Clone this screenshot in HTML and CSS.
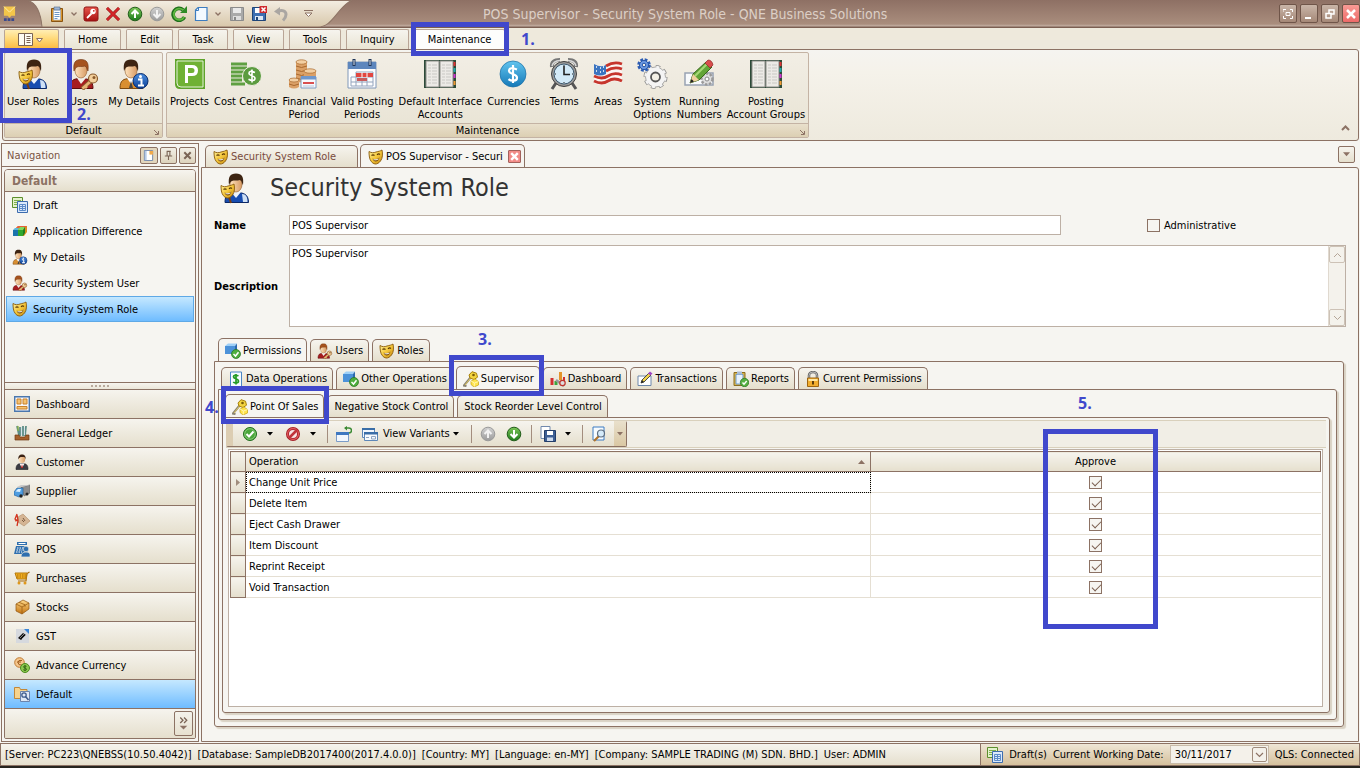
FILE: index.html
```html
<!DOCTYPE html>
<html lang="en">
<head>
    <meta charset="UTF-8">
    <meta name="viewport" content="width=device-width, initial-scale=1.0">
    <title>POS Supervisor - Security System Role - QNE Business Solutions</title>
    <link rel="stylesheet" href="styles.css">
</head>
<body>

<!-- shared icons -->
<svg class="sprite" aria-hidden="true">
    <defs>
        <linearGradient id="gGold" x1="0" y1="0" x2="1" y2="1"><stop offset="0" stop-color="#fff3a0"/><stop offset=".5" stop-color="#f5c83c"/><stop offset="1" stop-color="#c4860f"/></linearGradient>
        <linearGradient id="gGreen" x1="0" y1="0" x2="0" y2="1"><stop offset="0" stop-color="#7cc657"/><stop offset="1" stop-color="#1d7a1c"/></linearGradient>
        <linearGradient id="gGray" x1="0" y1="0" x2="0" y2="1"><stop offset="0" stop-color="#d2d2d2"/><stop offset="1" stop-color="#9b9b9b"/></linearGradient>
        <linearGradient id="gBlue" x1="0" y1="0" x2="0" y2="1"><stop offset="0" stop-color="#62c4ee"/><stop offset="1" stop-color="#1579b8"/></linearGradient>
        <linearGradient id="gInfo" x1="0" y1="0" x2="0" y2="1"><stop offset="0" stop-color="#4d8fe0"/><stop offset="1" stop-color="#0b3f96"/></linearGradient>
        <linearGradient id="gRed" x1="0" y1="0" x2="0" y2="1"><stop offset="0" stop-color="#e8574c"/><stop offset="1" stop-color="#a80f10"/></linearGradient>
        <linearGradient id="gFace" x1="0" y1="0" x2="1" y2="0"><stop offset="0" stop-color="#ffe3bd"/><stop offset="1" stop-color="#d79a64"/></linearGradient>
        <linearGradient id="gBox" x1="0" y1="0" x2="0" y2="1"><stop offset="0" stop-color="#ffd98a"/><stop offset="1" stop-color="#c4730f"/></linearGradient>
    </defs>

    <symbol id="mask" viewBox="0 0 16 16">
        <path d="M1 2.500c2.500 1.500 4.500 1.500 7 .5 2.500-.6 4.500-1 6-2 .8 4 .8 8-1.500 11-1.500 2-3.500 3.200-5.500 3-3-.6-5-3.500-5.600-7C1.100 6 1 4 1 2.500z" fill="url(#gGold)" stroke="#8a5a08" stroke-width=".9"/>
        <path d="M3.500 6.500q1.500-1.200 3 0M9 5.800q1.500-1.500 3-.4" fill="none" stroke="#5b3704" stroke-width="1.200"/>
        <path d="M4.500 9.500c2 1 5 .8 7-1-.6 2.500-2 4-3.800 4-1.500 0-2.600-1.200-3.200-3z" fill="#7a4a06"/>
        <path d="M5.600 10.500c1.500.6 3.300.4 4.800-.5" stroke="#fff" stroke-width="1" fill="none"/>
    </symbol>
    <symbol id="personBlue" viewBox="0 0 32 32">
        <path d="M6 30.500c0-8 3-10 11-10s12.500 2 12.500 10z" fill="#174cb0" stroke="#0b2766"/>
        <path d="M23 22c4 0 5.500 3 5.500 8H24z" fill="#cfe0f5"/><path d="M12 20l5 6 5-6-5-2z" fill="#eef3fa"/>
        <ellipse cx="17" cy="12.500" rx="6" ry="7.500" fill="url(#gFace)" stroke="#8f5a2a" stroke-width=".6"/>
        <path d="M10 13C9 5 11 1.500 17 1.500S25 5 24 13c-1-1-1-4-3-5-3 1-6 0-8 1-2 1-2 2-3 4z" fill="#3d2412"/>
    </symbol>
    <symbol id="personRole" viewBox="0 0 32 32">
        <use href="#personBlue" width="32" height="32"/>
        <path d="M10 25l2 6" stroke="#7a3e10" stroke-width="2"/>
        <use href="#mask" x="1" y="11" width="16" height="16"/>
    </symbol>
    <symbol id="personKey" viewBox="0 0 32 32">
        <path d="M2 30.500c0-8 3-10 11-10s12 2 12 10z" fill="#a61c1f" stroke="#5c0b0c"/>
        <path d="M9 20l4 6 5-6-5-2z" fill="#f2efe8"/>
        <ellipse cx="13" cy="12.500" rx="6" ry="7.500" fill="url(#gFace)" stroke="#8f5a2a" stroke-width=".6"/>
        <path d="M6 13C5 5 7 1.500 13 1.500S21 5 20 13c-1-1-1-4-3-5-3 1-6 0-8 1-2 1-2 2-3 4z" fill="#a5531f" stroke="#6d3310" stroke-width=".6"/>
        <path d="M23 23L14 31" stroke="#8a5a2c" stroke-width="4.500"/><path d="M23 23L14.500 30.500M17 28l2 2" stroke="#e8b476" stroke-width="2.600"/>
        <circle cx="25" cy="20.500" r="4.500" fill="#f3cf9b" stroke="#8a5a2c" stroke-width="1.200"/><circle cx="26" cy="19.500" r="1.500" fill="#8a5a2c"/>
    </symbol>
    <symbol id="personInfo" viewBox="0 0 32 32">
        <path d="M2 30.500c0-8 3-10 11-10s12 2 12 10z" fill="#d98f31" stroke="#7d4a10"/>
        <path d="M9 20l4 6 5-6-5-2z" fill="#fff"/><path d="M13 23l2 7h-4z" fill="#444"/>
        <ellipse cx="13" cy="12.500" rx="6" ry="7.500" fill="url(#gFace)" stroke="#8f5a2a" stroke-width=".6"/>
        <path d="M6 13C5 5 7 1.500 13 1.500S21 5 20 13c-1-1-1-4-3-5-3 1-6 0-8 1-2 1-2 2-3 4z" fill="#3d2412"/>
        <circle cx="22.500" cy="23" r="7.500" fill="url(#gInfo)" stroke="#06296b"/>
        <path d="M20 21.500h3.500v6M20 27.500h6" stroke="#fff" stroke-width="2" fill="none"/><circle cx="22.500" cy="18.500" r="1.500" fill="#fff"/>
    </symbol>
    <symbol id="projects" viewBox="0 0 32 32">
        <path d="M1 1h30v30H6q-5 0-5-5z" fill="#5fa32b"/><path d="M3 3h26v26H7q-4 0-4-4z" fill="#6fb134" stroke="#e6f3d9"/>
        <path d="M11 7h7q6 0 6 5.500T18 18h-4v7h-3zm3 3v5h4q2.500 0 2.500-2.500T18 10z" fill="#fff" fill-rule="evenodd"/>
    </symbol>
    <symbol id="cost" viewBox="0 0 32 32">
        <path d="M1 6h16M1 10h16M1 14h13M1 18h11M1 22h11M1 26h14" stroke="#5fa042" stroke-width="3"/>
        <circle cx="22" cy="18" r="9.500" fill="#5c9c40" stroke="#f0ede2"/>
        <path d="M25 14.500q-6-2.500-6 .8c0 3 6 2 6 5s-4 2.500-6.500 1M22 11.500v13" fill="none" stroke="#fff" stroke-width="1.600"/>
    </symbol>
    <symbol id="financial" viewBox="0 0 32 32">
        <path d="M8 4v19q6 3 11 0V4z" fill="#dba066"/><ellipse cx="13.500" cy="4" rx="5.500" ry="2.200" fill="#f3cfa2" stroke="#a8682e" stroke-width=".7"/>
        <path d="M8 8q5.500 3 11 0M8 12q5.500 3 11 0M8 16q5.500 3 11 0M8 20q5.500 3 11 0" stroke="#a8682e" fill="none"/>
        <path d="M1 22v7q5 3 10 0v-7z" fill="#dba066"/><ellipse cx="6" cy="22" rx="5" ry="2" fill="#f3cfa2" stroke="#a8682e" stroke-width=".7"/><path d="M1 26q5 3 10 0" stroke="#a8682e" fill="none"/>
        <path d="M16 13v8h12v-8z" fill="#dba066"/><ellipse cx="22" cy="13" rx="6" ry="2.200" fill="#f3cfa2" stroke="#a8682e" stroke-width=".7"/>
        <path d="M13 19h15v11H13z" fill="#f6f9fd" stroke="#7f9dc4"/><path d="M13 18h15v3.500H13z" fill="#6f97cc"/><path d="M15 25h11" stroke="#d95050" stroke-width="2"/><path d="M15 28h11" stroke="#b9c7da"/>
    </symbol>
    <symbol id="calendar" viewBox="0 0 32 32">
        <path d="M2 4h28v26H2z" fill="#fdfdfe" stroke="#8098b8"/><path d="M2 4h28v7H2z" fill="#5d86bd"/>
        <path d="M8 1v7M24 1v7" stroke="#1f3558" stroke-width="3"/><path d="M8 2v5M24 2v5" stroke="#dfe8f4"/>
        <path d="M10 14h17v14H5v-9h22M5 24h22M10 14v14M16 14v14M21 14v14" fill="none" stroke="#93a4bd"/>
        <path d="M10 15h17v4H10z" fill="#e24640"/><path d="M11 20h10v3H11z" fill="#c85b5b"/><path d="M16 14v6M21 14v6" stroke="#fff"/>
    </symbol>
    <symbol id="ledger" viewBox="0 0 32 32">
        <path d="M0 2h32v28H0z" fill="#2c4a38"/><path d="M2 3h13v26H2zM16 3h13v26H16z" fill="#eceae6" stroke="#8b8b86"/>
        <path d="M4 7h9M4 10h9M4 13h9M4 16h9M4 19h9M4 22h9M4 25h9M18 7h9M18 10h9M18 13h9M18 16h9M18 19h9M18 22h9M18 25h9" stroke="#c9c8c4" stroke-dasharray="3 1 5 1"/>
        <path d="M29.500 4h2v4h-2z" fill="#d33"/><path d="M29.500 10h2v4h-2z" fill="#2aa"/><path d="M29.500 16h2v4h-2z" fill="#c3c"/><path d="M29.500 23h2v4h-2z" fill="#e93"/>
    </symbol>
    <symbol id="currency" viewBox="0 0 32 32">
        <circle cx="16" cy="16" r="13" fill="url(#gBlue)" stroke="#1a6fa5" stroke-width=".7"/>
        <path d="M20 11.500q-8-3-8 1.200c0 4 8 2.500 8 7 0 4-6 3.500-8.500 1.500M16 7v18" fill="none" stroke="#fff" stroke-width="2.200"/>
    </symbol>
    <symbol id="clock" viewBox="0 0 32 32">
        <path d="M8 25l-4 6M24 25l4 6" stroke="#555" stroke-width="3"/>
        <path d="M4 9Q3 2 12 2M28 9q1-7-8-7" fill="none" stroke="#777" stroke-width="4"/><path d="M4 8q1-5 8-5.500M28 8q-1-5-8-5.500" fill="none" stroke="#d8d8d8" stroke-width="1.500"/>
        <circle cx="16" cy="16" r="12.500" fill="#999" stroke="#3f3f3f"/><circle cx="16" cy="16" r="10" fill="#d3eaf8" stroke="#3e5a70"/>
        <path d="M16 8v8.500h6" fill="none" stroke="#222" stroke-width="1.600"/><path d="M16 7v1M16 24v1M7 16h1M24 16h1" stroke="#222"/>
    </symbol>
    <symbol id="flag" viewBox="0 0 32 32">
        <path d="M2 6q8 4 14 0t14 0v19q-8-4-14 0t-14 0z" fill="#fbf5f2"/>
        <path d="M14 8q8-5 16-2M14 13q8-5 16-2M2 18q8 4 14 0t14-1M2 23q8 4 14 0t14 0" fill="none" stroke="#c6352c" stroke-width="2.800"/>
        <path d="M2 6q7 4 12 1v9q-6 3-12 0z" fill="#3b74c0"/><path d="M4 9h1m3 1h1m2-1h1M4 13h1m3 1h1m2-1h1" stroke="#fff" stroke-width="1.500"/>
    </symbol>
    <symbol id="gears" viewBox="0 0 32 32">
        <circle cx="19.500" cy="19" r="10" fill="none" stroke="#8a8a8a" stroke-width="4" stroke-dasharray="4.200 3.650"/>
        <circle cx="19.500" cy="19" r="10" fill="#f4f4f4" stroke="#999" stroke-width=".8"/><circle cx="19.500" cy="19" r="10" fill="none" stroke="#f4f4f4" stroke-width="2.500" stroke-dasharray="3.200 4.650" stroke-dashoffset="-.5"/>
        <circle cx="19.500" cy="19" r="4.500" fill="#f3f0e6" stroke="#555" stroke-width="1.800"/>
        <circle cx="8" cy="7" r="5" fill="none" stroke="#2c5cb4" stroke-width="3.500" stroke-dasharray="2.500 1.430"/>
        <circle cx="8" cy="7" r="4.500" fill="#6d9be4" stroke="#2452a4"/><circle cx="8" cy="7" r="1.800" fill="#f3f0e6" stroke="#2452a4"/>
    </symbol>
    <symbol id="running" viewBox="0 0 32 32">
        <path d="M2 15h28v12H2z" fill="#f8fafc" stroke="#98a3b2" stroke-width="1.500"/>
        <circle cx="24" cy="21" r="5.500" fill="#ddd" stroke="#999" stroke-width="2.500" stroke-dasharray="2.500 1.500"/><circle cx="24" cy="21" r="2" fill="#fff" stroke="#888"/>
        <path d="M7 25l3-9L23 4l6 5-13 13z" fill="#62a437" stroke="#37691b"/><path d="M12 18L24 6" stroke="#a6d876" stroke-width="2"/>
        <path d="M22 5l3-3q4 0 5 5l-3 3z" fill="#d84d4d" stroke="#912626" stroke-width=".7"/><path d="M7 25l3-9 6 6z" fill="#f0cf9d"/><path d="M7 25l1.500-4 2.500 2.500z" fill="#222"/>
    </symbol>

    <symbol id="clip" viewBox="0 0 16 16"><path d="M2.500 2.500h11v13h-11z" fill="#d9932a" stroke="#8a5410"/><path d="M4.500 4h7v10h-7z" fill="#fff" stroke="#8ba2c2" stroke-width=".6"/><path d="M5.500 6.500h5m-5 2h5m-5 2h5m-5 2h3" stroke="#6d96c8"/><path d="M5 1h6v3H5z" fill="#9fb6d4" stroke="#51688a" stroke-width=".6"/></symbol>
    <symbol id="redkey" viewBox="0 0 16 16"><rect x="1" y="1" width="14" height="14" rx="2" fill="url(#gRed)" stroke="#8f1414"/><circle cx="10" cy="5.500" r="2.700" fill="#fff"/><circle cx="10.800" cy="4.800" r=".9" fill="#c22"/><path d="M8.500 7.500L4 12" stroke="#fff" stroke-width="1.800" fill="none"/></symbol>
    <symbol id="redx" viewBox="0 0 16 16"><path d="M2 2l12 12M14 2L2 14" stroke="#8c1111" stroke-width="3"/><path d="M2 2l12 12M14 2L2 14" stroke="#d6262a" stroke-width="1.800"/></symbol>
    <symbol id="up" viewBox="0 0 16 16"><circle cx="8" cy="8" r="6.800" fill="url(#gGreen)" stroke="#245e1c"/><path d="M8 12V5M4.500 8L8 4.500 11.500 8" stroke="#fff" stroke-width="2" fill="none"/></symbol>
    <symbol id="upGray" viewBox="0 0 16 16"><circle cx="8" cy="8" r="6.800" fill="url(#gGray)" stroke="#9a9a9a"/><path d="M8 12V5M4.500 8L8 4.500 11.500 8" stroke="#f2f2f2" stroke-width="2" fill="none"/></symbol>
    <symbol id="downGray" viewBox="0 0 16 16"><circle cx="8" cy="8" r="6.800" fill="url(#gGray)" stroke="#9a9a9a"/><path d="M8 4v7M4.500 8L8 11.500 11.500 8" stroke="#f2f2f2" stroke-width="2" fill="none"/></symbol>
    <symbol id="down" viewBox="0 0 16 16"><circle cx="8" cy="8" r="6.800" fill="url(#gGreen)" stroke="#245e1c"/><path d="M8 4v7M4.500 8L8 11.500 11.500 8" stroke="#fff" stroke-width="2" fill="none"/></symbol>
    <symbol id="refresh" viewBox="0 0 16 16"><path d="M13.500 11A6 6 0 1 1 12 3.800" fill="none" stroke="#1d6e1b" stroke-width="3.600"/><path d="M13.200 11A5.600 5.600 0 1 1 12 4" fill="none" stroke="#5fb83f" stroke-width="1.800"/><path d="M9 7h7V0z" fill="#2f8b27"/></symbol>
    <symbol id="newdoc" viewBox="0 0 16 16"><path d="M5 1.500h9v13H2.500V4z" fill="#f3f9ff" stroke="#3c7cc0" stroke-width="1.200"/><path d="M2.500 4.500H5.500V1.500" fill="none" stroke="#3c7cc0"/></symbol>
    <symbol id="saveGray" viewBox="0 0 16 16"><path d="M1.500 1.500h13v13h-13z" fill="#a9a9a9" stroke="#8b8b8b"/><path d="M4 2h8v5H4z" fill="#e9e9e9"/><path d="M4 10h8v4H4z" fill="#ddd"/><path d="M5 11h2v3H5z" fill="#888"/></symbol>
    <symbol id="saveClose" viewBox="0 0 16 16"><path d="M1.500 1.500h13v13h-13z" fill="#3e6fb2" stroke="#1e4478"/><path d="M4 2h6v5H4z" fill="#fff"/><path d="M4 10h8v4H4z" fill="#dde8f5"/><path d="M5 11h2v3H5z" fill="#1e4478"/><path d="M8.500 0H16v7H8.500z" fill="#cf2a2e"/><path d="M10.500 1.500l4 4m0-4l-4 4" stroke="#fff" stroke-width="1.500"/></symbol>
    <symbol id="undo" viewBox="0 0 16 16"><path d="M5 5.500c4-2 8-.5 8 3 0 2.500-1 4-3 6" fill="none" stroke="#aaa6a2" stroke-width="3"/><path d="M1 5.500L7 1v8.500z" fill="#aaa6a2"/></symbol>
    <symbol id="chev" viewBox="0 0 6 6"><path d="M.5 1.500L3 4l2.500-2.500" fill="none" stroke="#8c7264" stroke-width="1.300"/></symbol>

    <symbol id="draft" viewBox="0 0 16 16"><path d="M.500.500h10v10H.5z" fill="#e3f2cb" stroke="#5c8f2c"/><path d="M2 3.500h7M2 5.500h7M2 7.500h4" stroke="#7fae4d"/><path d="M5.500 4.500h10v11h-10z" fill="#dbe9fb" stroke="#3c6cae"/><path d="M7.500 7.500h6v6h-6zM7.500 9.500h6M7.500 11.500h6M10.500 7v7" fill="none" stroke="#5b8bc9"/></symbol>
    <symbol id="boxes" viewBox="0 0 16 16"><path d="M4 5l2-2h9v6l-3 4H4z" fill="#d7921c"/><path d="M6 3h9l-2 2H4z" fill="#e8603a"/><path d="M1 7h5v6H1z" fill="#1b74ad"/><path d="M1 7l2-2h4L6 7z" fill="#5db7dd"/><path d="M6 7h5v6H6z" fill="#2fa82f"/><path d="M6 7l2-3h5l-2 3z" fill="#7fd95e"/><path d="M11 7l2-3v6l-2 3z" fill="#1d7d22"/></symbol>
    <symbol id="dash" viewBox="0 0 16 16"><path d="M.700.700h14.600v14.600H.7z" fill="#f6f7fa" stroke="#4a77ad" stroke-width="1.400"/><path d="M3 3h4v5H3zM9 3h4v5H9zM3 10.500h10V13H3z" fill="#f5c271" stroke="#c9812b"/></symbol>
    <symbol id="gl" viewBox="0 0 16 16"><path d="M3 1l2 9M6 2v9M9 1v10M12 1l-1 10" stroke="#5c8d86" stroke-width="1.800"/><path d="M7.500 2v8M10.500 3v7" stroke="#d5e1ea"/><path d="M4 1v5" stroke="#8cb23f" stroke-width="1.200"/><path d="M1 10h4l1 2h5l1-2h3v5H1z" fill="#a5602b" stroke="#6d3812" stroke-width=".7"/></symbol>
    <symbol id="customer" viewBox="0 0 16 16"><path d="M2 15.500c0-5 2-6 6-6s6 1 6 6z" fill="#3b3b42" stroke="#1d1d22" stroke-width=".6"/><path d="M5.500 9.500L8 14l2.500-4.500z" fill="#fff"/><path d="M8 10l1 4H7z" fill="#b22"/><ellipse cx="8" cy="5" rx="3.200" ry="4" fill="url(#gFace)"/><path d="M4.400 5.500C4 2 5.500.500 8 .5s4 1.500 3.600 5c-.6-2-1-2.500-2-2.500-2.500 0-4.200-.5-5.200 2.500z" fill="#3a2113"/></symbol>
    <symbol id="truck" viewBox="0 0 16 16"><path d="M7 4l9-2v8l-6 3z" fill="#8d8d8d" stroke="#5e5e5e" stroke-width=".6"/><path d="M3 4l4-2h9L8 4z" fill="#c9c9c9"/><path d="M0 9l3-4h6v7l-4 2-5-2z" fill="#4f9de0" stroke="#1d5a99" stroke-width=".6"/><path d="M1.500 8.500L4 6h3l-1 3z" fill="#d9efff"/><circle cx="7" cy="13" r="1.700" fill="#222"/><circle cx="13" cy="11" r="1.500" fill="#222"/></symbol>
    <symbol id="sales" viewBox="0 0 16 16"><path d="M4 5l5-3 7 7-6 5-6-4z" fill="#d5b594" stroke="#b08d6a" stroke-width=".6"/><path d="M9 6l2 3M8 8l2 2" stroke="#7a5b40"/><path d="M3 2L1 7l3 2-1 5M3 3l1 5-3 1" fill="none" stroke="#d2341f" stroke-width="1.300"/></symbol>
    <symbol id="pos" viewBox="0 0 16 16"><path d="M3 1h10v3H3zM2 5h11l1 8H0z" fill="#2f6fae"/><path d="M4.500 2h7v1h-7z" fill="#fff"/><path d="M3 7h6M2.500 9h6M2 11h6" stroke="#fff" stroke-dasharray="1.500 1"/><circle cx="12" cy="8" r="2.800" fill="#2f6fae" stroke="#f0ede2" stroke-width=".7"/><path d="M7 16q0-5 5-5t4 5z" fill="#2f6fae" stroke="#f0ede2" stroke-width=".7"/></symbol>
    <symbol id="cart" viewBox="0 0 16 16"><path d="M15.500 2L13 3.500 12 11H4" fill="none" stroke="#a86b0c" stroke-width="1.200"/><path d="M1 3h12l-1 6H3z" fill="#f2b01e" stroke="#b5790b"/><path d="M3 5h9M3 7h9" stroke="#a86b0c" stroke-dasharray="1.500 1"/><circle cx="5" cy="13" r="1.500" fill="#e0981a"/><circle cx="11" cy="13" r="1.500" fill="#e0981a"/></symbol>
    <symbol id="box" viewBox="0 0 16 16"><path d="M2 5l7-4 6 3v6l-7 5-6-3z" fill="url(#gBox)" stroke="#8f5510" stroke-width=".7"/><path d="M2 5l6 3 7-4M8 8v7M5 3.300l6 2.500v2" fill="none" stroke="#9c5f14" stroke-width=".8"/></symbol>
    <symbol id="gst" viewBox="0 0 16 16"><path d="M2 1h13v14H2z" fill="#d6d9de"/><path d="M10 1h5v5z" fill="#3a86d8"/><path d="M4 10l5-5 3 2-5 5z" fill="#111"/><path d="M6 10l4-4M8 11l4-4" stroke="#d6d9de" stroke-width=".6"/></symbol>
    <symbol id="coins" viewBox="0 0 16 16"><circle cx="5.500" cy="5.500" r="4.800" fill="#f5c68c" stroke="#bf7a33"/><path d="M8 3.500Q4 2.500 4 5.500T8 8M3 5h4" fill="none" stroke="#a05f20"/><circle cx="11" cy="11" r="4.500" fill="#8cc850" stroke="#4a8a1f"/><path d="M12.500 9.300q-3-1-3 .6c0 1.400 3 .8 3 2.300s-2 1.300-3.200.5M11 8v6" fill="none" stroke="#2c5e0f" stroke-width=".9"/></symbol>
    <symbol id="folder" viewBox="0 0 16 16"><path d="M.500 1.500h5l1 2H13v9H.5z" fill="#f6d38d" stroke="#c0873a"/><path d="M6.500 5.500h9v10h-9z" fill="#dfe8f5" stroke="#6a84ad"/><circle cx="10" cy="9" r="2.200" fill="none" stroke="#3e5c8c" stroke-width="1.300"/><path d="M11.500 10.500l3 3.500" stroke="#3e5c8c" stroke-width="1.600"/></symbol>

    <symbol id="cubeOk" viewBox="0 0 16 16"><path d="M0 3l3-2.500h9L10 3z" fill="#9fd0f7"/><path d="M0 3h10v8H0z" fill="#4c92d9"/><path d="M10 3l2-2.500V9l-2 2z" fill="#2b69ad"/><circle cx="11" cy="11" r="4.500" fill="#4fae3d" stroke="#24701c" stroke-width=".7"/><path d="M8.500 11l2 2 3-3.800" fill="none" stroke="#fff" stroke-width="1.500"/></symbol>
    <symbol id="dollarDoc" viewBox="0 0 16 16"><path d="M2.500 1h11v14.500h-11z" fill="#f4faff" stroke="#4a86c4"/><path d="M10.500 4.800q-5-1.500-5 1c0 2.500 5 1.500 5 4.200s-4 2.200-5.300 1M8 3v10.500" fill="none" stroke="#239a23" stroke-width="1.700"/></symbol>
    <symbol id="keyGold" viewBox="0 0 16 16"><path d="M8 6L1 14.500l2.500.5" fill="none" stroke="#8c8572" stroke-width="2.200"/><path d="M8 6.500L2 14" stroke="#e0c860" stroke-width="1"/><path d="M6 4L9 .700l4.500 1.500 1 4-3.500 2.300-4-1.500z" fill="#f3d440" stroke="#a8820c"/><circle cx="10.500" cy="4" r="1.300" fill="#7a5c08"/><path d="M8 10l4-2 3.500 2.500V14L11 16l-3-2.500z" fill="#ffe44d" stroke="#c6a112" stroke-width=".7"/><path d="M8 10l3.500 2 4-1.500M11.300 12v3.500" fill="none" stroke="#fff6b0"/></symbol>
    <symbol id="chart" viewBox="0 0 16 16"><path d="M.500 7h3v7h-3z" fill="#d22f2f"/><path d="M4.500 10h3v4h-3z" fill="#3aa53a"/><path d="M9 1h3v8H9z" fill="#e4942a"/><path d="M13 6h2v5h-2z" fill="#d22f2f"/><path d="M6 9l8 6" stroke="#999" stroke-width="2.500"/><circle cx="12.500" cy="12" r="2.700" fill="#ddd" stroke="#c0342c" stroke-width="1.200"/></symbol>
    <symbol id="edit" viewBox="0 0 16 16"><path d="M1 5h13v9.500H1z" fill="#fff" stroke="#6c87ab"/><path d="M4 12l1-3 7-7 2 2-7 7z" fill="#f1d24a" stroke="#3a3a3a" stroke-width=".9"/><path d="M11 2.500l2-2 2.500 2-2 2z" fill="#a044c4"/><path d="M4 12l1-3 2 2z" fill="#222"/></symbol>
    <symbol id="report" viewBox="0 0 16 16"><path d="M1 1.500h11v13H1z" fill="#d8b44a" stroke="#8b6d1e"/><path d="M3 3.500h7v9.500H3z" fill="#e6f1fc" stroke="#6f9ccc"/><path d="M4 .500h5v3H4z" fill="#a9bcd6"/><circle cx="11.500" cy="11.500" r="4.200" fill="#56b043" stroke="#25711c" stroke-width=".7"/><path d="M9.500 11.500l1.500 1.700 2.700-3.200" fill="none" stroke="#fff" stroke-width="1.400"/></symbol>
    <symbol id="lock" viewBox="0 0 16 16"><path d="M4 8V4.500a4 3.500 0 0 1 8 0V8" fill="none" stroke="#666" stroke-width="2.500"/><path d="M4 8V4.500a4 3.500 0 0 1 8 0V8" fill="none" stroke="#ccc" stroke-width=".8"/><path d="M2.500 7h11v8.500h-11z" fill="#f2ae2e" stroke="#9e6510"/><path d="M3.500 8h9v2h-9z" fill="#ffe6a0"/><path d="M7 10h2v3.500H7z" fill="#5e3c08"/></symbol>
    <symbol id="ok" viewBox="0 0 16 16"><circle cx="8" cy="8" r="6.500" fill="#4aa63a" stroke="#1f6b1c"/><circle cx="8" cy="8" r="5.300" fill="none" stroke="#9fd88c" stroke-width=".7"/><path d="M4.500 8L7 10.500 11.500 5.500" fill="none" stroke="#fff" stroke-width="2"/></symbol>
    <symbol id="no" viewBox="0 0 16 16"><circle cx="8" cy="8" r="5.500" fill="#f7e3e3" stroke="#a31c24" stroke-width="3"/><circle cx="8" cy="8" r="5.500" fill="none" stroke="#e0585c" stroke-width="1.300"/><path d="M4 12l8-8" stroke="#c0323a" stroke-width="2.500"/></symbol>
    <symbol id="reset" viewBox="0 0 16 16"><path d="M.500 6.500h12v9H.5z" fill="#f2f7fd" stroke="#7b9cc8"/><path d="M0 6h13v3H0z" fill="#3f78c0"/><path d="M9 2h4q2.500 0 2.500 2.500T13 7" fill="none" stroke="#3b8a34" stroke-width="1.500"/><path d="M11 0v4.500L8 2z" fill="#3b8a34"/></symbol>
    <symbol id="variants" viewBox="0 0 16 16"><path d="M.500 2.500h12v9H.5z" fill="#f2f7fd" stroke="#5d87b8"/><path d="M0 2h13v2H0z" fill="#3a6ea8"/><path d="M2.500 6.500h13v8h-13z" fill="#f7fafd" stroke="#5d87b8"/><path d="M2 6h14v2.500H2z" fill="#3a6ea8"/><path d="M4 11.500h3m2.500-1h4v2.500h-4z" stroke="#8ea5c2" fill="none"/></symbol>
    <symbol id="saveDoc" viewBox="0 0 16 16"><path d="M1 .500h9v12H1z" fill="#fff" stroke="#7189ad"/><path d="M4.500 4.500h11v11h-11z" fill="#3d5f95" stroke="#233d68"/><path d="M7 5h6v4H7z" fill="#fff"/><path d="M7 11.500h6V15H7z" fill="#cfdcee"/></symbol>
    <symbol id="preview" viewBox="0 0 16 16"><path d="M2 1h11v13H2z" fill="#f6fbff" stroke="#3d7cc4"/><path d="M8 10l-5 5" stroke="#b0742c" stroke-width="2.200"/><circle cx="10" cy="7.500" r="3.500" fill="#d5ebfa" stroke="#5d6d80" stroke-width="1.200"/></symbol>
    <symbol id="tri" viewBox="0 0 6 4"><path d="M0 0h6L3 3.500z"/></symbol>
</svg>

<header class="titlebar">
    <div class="app-icon">
        <svg viewBox="0 0 14 18"><path d="M1 1h12v10H9l-2 2-2-2H1z" fill="#f4c64a"/><path d="M1 1l6 6 6-6" fill="none" stroke="#fff0b0"/><path d="M1 15h12" stroke="#3b4a8c" stroke-width="3" stroke-dasharray="3 1"/></svg>
    </div>
    <nav class="qat" aria-label="Quick access">
        <svg class="qat-shape" viewBox="0 0 324 26" preserveAspectRatio="none"><defs><linearGradient id="gQat" x1="0" y1="0" x2="0" y2="1"><stop offset="0" stop-color="#f3ede2"/><stop offset="1" stop-color="#d8c7aa"/></linearGradient></defs><path d="M0 .5h323.500q-6 3-12 10c-8 9-12 15.500-22 15.500H14Q12 4 0 .5z" fill="url(#gQat)" stroke="#8c7264"/></svg>
        <button class="tool" aria-label="Clipboard"><svg><use href="#clip"/></svg></button>
        <button class="tool small" aria-label="Clipboard menu"><svg><use href="#chev"/></svg></button>
        <button class="tool" aria-label="Log off"><svg><use href="#redkey"/></svg></button>
        <button class="tool" aria-label="Delete"><svg><use href="#redx"/></svg></button>
        <button class="tool" aria-label="Previous"><svg><use href="#up"/></svg></button>
        <button class="tool" aria-label="Next"><svg><use href="#downGray"/></svg></button>
        <button class="tool" aria-label="Refresh"><svg><use href="#refresh"/></svg></button>
        <button class="tool" aria-label="New"><svg><use href="#newdoc"/></svg></button>
        <button class="tool small" aria-label="New menu"><svg><use href="#chev"/></svg></button>
        <button class="tool gap" aria-label="Save"><svg><use href="#saveGray"/></svg></button>
        <button class="tool" aria-label="Save and close"><svg><use href="#saveClose"/></svg></button>
        <button class="tool" aria-label="Undo"><svg><use href="#undo"/></svg></button>
        <button class="tool more" aria-label="Customize"><svg viewBox="0 0 9 9"><path d="M0 1.500h9M1 4h7L4.500 7.500z" fill="#fff" stroke="#8c7264"/></svg></button>
    </nav>
    <h1 class="caption">POS Supervisor - Security System Role - QNE Business Solutions</h1>
    <div class="window-buttons">
        <button aria-label="Full screen"><svg viewBox="0 0 10 10"><path d="M0 3V.5h3M7 .5h2.500V3M9.500 7v2.500H7M3 9.500H.5V7M3 3.500h4v3H3z" fill="none" stroke="#fff"/></svg></button>
        <button aria-label="Minimize"><svg viewBox="0 0 10 10"><path d="M1 9h6" stroke="#fff" stroke-width="2"/></svg></button>
        <button aria-label="Restore"><svg viewBox="0 0 10 10"><path d="M4 4V1h5v4H6M1 4.500h5V9H1z" fill="none" stroke="#fff" stroke-width="1.500"/></svg></button>
        <button class="close" aria-label="Close"><svg viewBox="0 0 10 10"><path d="M1 1l8 8M9 1L1 9" stroke="#fff" stroke-width="2.500"/></svg></button>
    </div>
</header>

<div class="ribbon-tabs">
    <button class="app-menu" aria-label="Application menu"><svg viewBox="0 0 26 14"><path d="M.500.500h14v12H.5z" fill="#fdfbf2" stroke="#7a6455"/><path d="M6.500 0v13M8.500 3.500h4M8.500 5.500h4M8.500 7.500h4M8.500 9.500h4" stroke="#7a6455"/><path d="M18.500 5.500h6L21.500 9z" fill="#fff" stroke="#8c7264"/></svg></button>
    <button>Home</button>
    <button>Edit</button>
    <button>Task</button>
    <button>View</button>
    <button>Tools</button>
    <button>Inquiry</button>
    <button class="active">Maintenance</button>
</div>

<section class="ribbon">
    <div class="group">
        <div class="group-items roomy">
            <button><svg><use href="#personRole"/></svg>User Roles</button>
            <button><svg><use href="#personKey"/></svg>Users</button>
            <button><svg><use href="#personInfo"/></svg>My Details</button>
        </div>
        <div class="group-caption">Default<svg viewBox="0 0 5 5"><path d="M0 0l4 4M4.500 1v3.500H1" fill="none" stroke="#8c7264"/></svg></div>
    </div>
    <div class="group">
        <div class="group-items">
            <button><svg><use href="#projects"/></svg>Projects</button>
            <button><svg><use href="#cost"/></svg>Cost Centres</button>
            <button><svg><use href="#financial"/></svg>Financial<br>Period</button>
            <button><svg><use href="#calendar"/></svg>Valid Posting<br>Periods</button>
            <button><svg><use href="#ledger"/></svg>Default Interface<br>Accounts</button>
            <button><svg><use href="#currency"/></svg>Currencies</button>
            <button><svg><use href="#clock"/></svg>Terms</button>
            <button><svg><use href="#flag"/></svg>Areas</button>
            <button><svg><use href="#gears"/></svg>System<br>Options</button>
            <button><svg><use href="#running"/></svg>Running<br>Numbers</button>
            <button><svg><use href="#ledger"/></svg>Posting<br>Account Groups</button>
        </div>
        <div class="group-caption">Maintenance<svg viewBox="0 0 5 5"><path d="M0 0l4 4M4.500 1v3.500H1" fill="none" stroke="#8c7264"/></svg></div>
    </div>
    <button class="collapse" aria-label="Collapse ribbon"><svg viewBox="0 0 9 6"><path d="M1 5l3.500-3.500L8 5" fill="none" stroke="#8c7264" stroke-width="2"/></svg></button>
</section>

<div class="workspace">
    <aside class="navigation">
        <div class="nav-title">
            <span>Navigation</span>
            <button class="wide" aria-label="Layout"><svg viewBox="0 0 12 12"><path d="M1.500.500h9v11h-9z" fill="#fff" stroke="#6b83a8"/><path d="M2 1h2v10H2z" fill="#b8cbe6"/><path d="M7 1h4v4H7z" fill="#f0a94a"/></svg></button>
            <button aria-label="Pin"><svg viewBox="0 0 12 12"><path d="M4 1.500h4.500M4.500 1v5M7.500 1v5M2 6.500h8M6 7v4" fill="none" stroke="#7a6455" stroke-width="1.200"/></svg></button>
            <button aria-label="Close navigation"><svg viewBox="0 0 12 12"><path d="M2.500 2.500l7 7M9.500 2.500l-7 7" stroke="#7a6455" stroke-width="2.200"/></svg></button>
        </div>
        <div class="nav-box">
            <h2>Default</h2>
            <div class="nav-items">
                <a href="#"><svg><use href="#draft"/></svg>Draft</a>
                <a href="#"><svg><use href="#boxes"/></svg>Application Difference</a>
                <a href="#"><svg><use href="#personInfo"/></svg>My Details</a>
                <a href="#"><svg><use href="#personKey"/></svg>Security System User</a>
                <a href="#" class="selected"><svg><use href="#mask"/></svg>Security System Role</a>
            </div>
            <div class="splitter"></div>
            <div class="nav-groups">
                <button><svg><use href="#dash"/></svg>Dashboard</button>
                <button><svg><use href="#gl"/></svg>General Ledger</button>
                <button><svg><use href="#customer"/></svg>Customer</button>
                <button><svg><use href="#truck"/></svg>Supplier</button>
                <button><svg><use href="#sales"/></svg>Sales</button>
                <button><svg><use href="#pos"/></svg>POS</button>
                <button><svg><use href="#cart"/></svg>Purchases</button>
                <button><svg><use href="#box"/></svg>Stocks</button>
                <button><svg><use href="#gst"/></svg>GST</button>
                <button><svg><use href="#coins"/></svg>Advance Currency</button>
                <button class="selected"><svg><use href="#folder"/></svg>Default</button>
            </div>
            <div class="nav-overflow">
                <button aria-label="More groups"><svg viewBox="0 0 8 12"><path d="M1 .500L3.500 3 1 5.500M4.500.500L7 3 4.500 5.500" fill="none" stroke="#7a6455" stroke-width="1.200"/><path d="M.500 8h7L4 11.500z" fill="#8c7264"/></svg></button>
            </div>
        </div>
    </aside>

    <main class="document">
        <div class="doc-tabs">
            <button class="doc-tab first"><svg><use href="#mask"/></svg>Security System Role</button>
            <div class="doc-tab active"><svg><use href="#mask"/></svg>POS Supervisor - Securi<button class="tab-close" aria-label="Close tab"><svg viewBox="0 0 10 10"><path d="M2 2l6 6M8 2L2 8" stroke="#fff" stroke-width="2.200"/></svg></button></div>
            <button class="tab-list" aria-label="Tab list"><svg><use href="#tri"/></svg></button>
        </div>

        <div class="doc-body">
            <div class="heading">
                <svg><use href="#personRole"/></svg>
                <h2>Security System Role</h2>
            </div>

            <form class="details">
                <label for="name">Name</label>
                <div class="name-row">
                    <input id="name" type="text" value="POS Supervisor">
                    <label class="check"><input type="checkbox">Administrative</label>
                </div>
                <label for="description">Description</label>
                <div class="memo">
                    <textarea id="description">POS Supervisor</textarea>
                    <div class="scrollbar">
                        <button type="button" aria-label="Scroll up"><svg viewBox="0 0 9 6"><path d="M1 5l3.500-3.500L8 5" fill="none" stroke="#b5a698"/></svg></button>
                        <button type="button" aria-label="Scroll down"><svg viewBox="0 0 9 6"><path d="M1 1l3.500 3.500L8 1" fill="none" stroke="#b5a698"/></svg></button>
                    </div>
                </div>
            </form>

            <div class="tabset level1">
                <div class="tabs">
                    <button class="active"><svg><use href="#cubeOk"/></svg>Permissions</button>
                    <button><svg><use href="#personKey"/></svg>Users</button>
                    <button><svg><use href="#mask"/></svg>Roles</button>
                </div>
                <div class="panel">
                    <div class="tabset">
                        <div class="tabs">
                            <button><svg><use href="#dollarDoc"/></svg>Data Operations</button>
                            <button><svg><use href="#cubeOk"/></svg>Other Operations</button>
                            <button class="active"><svg><use href="#keyGold"/></svg>Supervisor</button>
                            <button><svg><use href="#chart"/></svg>Dashboard</button>
                            <button><svg><use href="#edit"/></svg>Transactions</button>
                            <button><svg><use href="#report"/></svg>Reports</button>
                            <button><svg><use href="#lock"/></svg>Current Permissions</button>
                        </div>
                        <div class="panel">
                            <div class="tabset">
                                <div class="tabs">
                                    <button class="active"><svg><use href="#keyGold"/></svg>Point Of Sales</button>
                                    <button>Negative Stock Control</button>
                                    <button>Stock Reorder Level Control</button>
                                </div>
                                <div class="panel inner">
                                    <div class="toolbar-row">
                                        <div class="toolbar">
                                            <span class="grip"></span>
                                            <button aria-label="Grant"><svg><use href="#ok"/></svg></button>
                                            <button class="drop" aria-label="Grant menu"><svg><use href="#tri"/></svg></button>
                                            <button aria-label="Deny"><svg><use href="#no"/></svg></button>
                                            <button class="drop" aria-label="Deny menu"><svg><use href="#tri"/></svg></button>
                                            <span class="sep"></span>
                                            <button aria-label="Reset view"><svg><use href="#reset"/></svg></button>
                                            <button class="variants"><svg><use href="#variants"/></svg>View Variants<svg class="arrow"><use href="#tri"/></svg></button>
                                            <span class="sep"></span>
                                            <button aria-label="Previous record"><svg><use href="#upGray"/></svg></button>
                                            <button aria-label="Next record"><svg><use href="#down"/></svg></button>
                                            <span class="sep"></span>
                                            <button aria-label="Export"><svg><use href="#saveDoc"/></svg></button>
                                            <button class="drop" aria-label="Export menu"><svg><use href="#tri"/></svg></button>
                                            <span class="sep"></span>
                                            <button aria-label="Print preview"><svg><use href="#preview"/></svg></button>
                                            <button class="options" aria-label="Toolbar options"><svg><use href="#tri"/></svg></button>
                                        </div>
                                    </div>
                                    <div class="grid">
                                        <table>
                                            <colgroup><col class="col-mark"><col><col class="col-approve"></colgroup>
                                            <thead>
                                                <tr><th></th><th class="left"><div>Operation<svg viewBox="0 0 7 4"><path d="M0 4h7L3.500 0z" fill="#8c7264"/></svg></div></th><th>Approve</th></tr>
                                            </thead>
                                            <tbody>
                                                <tr class="focused"><th><svg viewBox="0 0 4 7"><path d="M0 0v7l4-3.500z" fill="#a08c7c"/></svg></th><td>Change Unit Price</td><td><input type="checkbox" checked aria-label="Approve Change Unit Price"></td></tr>
                                                <tr><th></th><td>Delete Item</td><td><input type="checkbox" checked aria-label="Approve Delete Item"></td></tr>
                                                <tr><th></th><td>Eject Cash Drawer</td><td><input type="checkbox" checked aria-label="Approve Eject Cash Drawer"></td></tr>
                                                <tr><th></th><td>Item Discount</td><td><input type="checkbox" checked aria-label="Approve Item Discount"></td></tr>
                                                <tr><th></th><td>Reprint Receipt</td><td><input type="checkbox" checked aria-label="Approve Reprint Receipt"></td></tr>
                                                <tr><th></th><td>Void Transaction</td><td><input type="checkbox" checked aria-label="Approve Void Transaction"></td></tr>
                                            </tbody>
                                        </table>
                                    </div>
                                </div>
                            </div>
                        </div>
                    </div>
                </div>
            </div>
        </div>
    </main>
</div>

<footer class="statusbar">
    <div class="status-left">
        <span>[Server: PC223\QNEBSS(10.50.4042)]</span>
        <span>[Database: SampleDB2017400(2017.4.0.0)]</span>
        <span>[Country: MY]</span>
        <span>[Language: en-MY]</span>
        <span>[Company: SAMPLE TRADING (M) SDN. BHD.]</span>
        <span>User: ADMIN</span>
    </div>
    <div class="status-right">
        <svg><use href="#draft"/></svg>
        <span>Draft(s)</span>
        <label for="workdate">Current Working Date:</label>
        <div class="date-edit">
            <input id="workdate" type="text" value="30/11/2017">
            <button aria-label="Pick date"><svg viewBox="0 0 9 6"><path d="M1 1l3.500 3.500L8 1" fill="none" stroke="#8c7264" stroke-width="1.200"/></svg></button>
        </div>
        <span>QLS: Connected</span>
    </div>
</footer>

<!-- walkthrough markers -->
<div class="marker m1"></div><span class="step s1">1.</span>
<div class="marker m2"></div><span class="step s2">2.</span>
<div class="marker m3"></div><span class="step s3">3.</span>
<div class="marker m4"></div><span class="step s4">4.</span>
<div class="marker m5"></div><span class="step s5">5.</span>

</body>
</html>
```
FILE: styles.css
```css
* {
    box-sizing: border-box;
}
body {
    margin: 0;
    height: 100vh;
    display: flex;
    flex-direction: column;
    position: relative;
    overflow: hidden;
    background-color: #f6f5f1;
    border-bottom: 2px solid #26241f;
    font-family: "DejaVu Sans Condensed", "DejaVu Sans", sans-serif;
    font-size: 11px;
    line-height: 13px;
    color: #000;
}
button, input, textarea {
    font: inherit;
    color: inherit;
    margin: 0;
    padding: 0;
    border: 0;
    background: none;
}
h1, h2 {
    margin: 0;
    font-weight: normal;
}
svg {
    display: block;
    flex: none;
    width: 16px;
    height: 16px;
}
.sprite {
    position: absolute;
    width: 0;
    height: 0;
}

/* title bar */
.titlebar {
    flex: none;
    display: flex;
    align-items: flex-start;
    height: 28px;
    background: linear-gradient(#8e7064, #a98d7d 24px, #c3aea2 26px, #7b5f52 27px);
}
.app-icon {
    width: 28px;
    padding: 5px 3px;
}
.app-icon svg {
    width: 13px;
    height: 18px;
}
.qat {
    position: relative;
    display: flex;
    align-items: center;
    width: 324px;
    height: 27px;
    padding-left: 18px;
}
.qat-shape {
    position: absolute;
    top: 0;
    left: 0;
    width: 100%;
    height: 100%;
}
.tool {
    position: relative;
    width: 22px;
    padding: 0 3px;
}
.tool.small {
    width: 12px;
}
.tool.small svg {
    width: 6px;
    height: 6px;
}
.tool.gap {
    margin-left: 2px;
}
.tool.more {
    width: 24px;
    padding-left: 12px;
}
.tool.more svg {
    width: 9px;
    height: 9px;
}
.caption {
    flex: 1;
    padding-left: 131px;
    font-size: 14px;
    line-height: 28px;
    color: #dccfc6;
    white-space: nowrap;
}
.window-buttons {
    display: flex;
    gap: 3px;
    padding-top: 4px;
}
.window-buttons button {
    width: 18px;
    height: 19px;
    padding: 3px;
    border: 1px solid #6f5549;
    border-radius: 2px;
    background: linear-gradient(#c9b5a8, #a58877);
}
.window-buttons svg {
    width: 10px;
    height: 10px;
}
.window-buttons .close {
    background: linear-gradient(#f79b95, #ee6a68);
}

/* ribbon */
.ribbon-tabs {
    flex: none;
    display: flex;
    gap: 5px;
    height: 21px;
    padding: 1px 4px 0;
    background-color: #eee9dc;
}
.ribbon-tabs button {
    padding: 0 13px;
    border: 1px solid #b9a596;
    border-bottom: 0;
    border-radius: 2px 2px 0 0;
    background: linear-gradient(#f6f4ee, #e9e4d3);
}
.ribbon-tabs .app-menu {
    width: 55px;
    background: linear-gradient(#ffeeb4, #ffd774 50%, #fbb93f);
}
.ribbon-tabs .app-menu svg {
    width: 26px;
    height: 14px;
}
.ribbon-tabs .active {
    background: #fdfdfc;
}
.ribbon {
    flex: none;
    display: flex;
    gap: 3px;
    height: 92px;
    margin: 0 1px 0 2px;
    padding: 2px 1px;
    border: 1px solid #8c7264;
    border-radius: 0 3px 3px 3px;
    background: linear-gradient(#f5f4f0, #f5f2ea 25%, #eeeade);
}
.group {
    display: flex;
    flex-direction: column;
    border: 1px solid #c4b3a4;
    border-radius: 2px;
    background: linear-gradient(#f2eee5, #e8e3d3);
}
.group-items {
    flex: 1;
    display: flex;
    gap: 1px;
    padding: 5px 1px 0;
}
.group-items button {
    display: flex;
    flex-direction: column;
    align-items: center;
    min-width: 43px;
    padding: 0 2px;
    white-space: nowrap;
}
.group-items.roomy {
    padding: 5px 0 0;
}
.group-items svg {
    width: 32px;
    height: 32px;
    margin-bottom: 5px;
}
.group-caption {
    position: relative;
    height: 14px;
    border-top: 1px solid #c4b3a4;
    background: linear-gradient(#e9e0cc, #dccfb3);
    text-align: center;
}
.group-caption svg {
    position: absolute;
    right: 3px;
    bottom: 2px;
    width: 5px;
    height: 5px;
}
.collapse {
    margin: auto 7px 7px auto;
}
.collapse svg {
    width: 9px;
    height: 6px;
}

/* workspace */
.workspace {
    flex: 1;
    display: flex;
    gap: 2px;
    min-height: 0;
    padding: 2px 1px 1px;
}
.navigation {
    display: flex;
    flex-direction: column;
    width: 198px;
    border: 1px solid #8c7264;
}
.nav-title {
    display: flex;
    align-items: center;
    gap: 2px;
    height: 23px;
    padding: 0 2px 0 5px;
    border-bottom: 1px solid #8c7264;
    color: #7a5444;
}
.nav-title span {
    flex: 1;
}
.nav-title button {
    width: 17px;
    height: 17px;
    padding: 2px;
    border: 1px solid #8c7264;
    border-radius: 2px;
    background: linear-gradient(#f2efe6, #ddd3bd);
}
.nav-title .wide {
    width: 18px;
    background: #e2d6bd;
}
.nav-title svg {
    width: 11px;
    height: 11px;
}
.nav-box {
    flex: 1;
    display: flex;
    flex-direction: column;
    margin: 2px;
    border: 1px solid #8c7264;
    border-radius: 4px 4px 2px 2px;
    overflow: hidden;
}
.nav-box h2 {
    height: 22px;
    padding-left: 7px;
    border-bottom: 1px solid #8c7264;
    background: linear-gradient(#f6f4ee, #e5dfcd);
    font-size: 12px;
    line-height: 22px;
    font-weight: bold;
    color: #8c7264;
}
.nav-items {
    flex: 1;
    padding: 0 1px;
}
.nav-items a {
    display: flex;
    align-items: center;
    gap: 5px;
    height: 26px;
    padding-left: 5px;
    border: 1px solid transparent;
    color: inherit;
    text-decoration: none;
}
.nav-items .selected {
    border-color: #5fa9e6;
    background: linear-gradient(#c5e8ff, #6fbcff);
}
.splitter {
    height: 8px;
    padding-top: 2px;
    border: solid #8c7264;
    border-width: 1px 0;
    background: linear-gradient(#f6f4ee, #ece7da);
}
.splitter::after {
    content: "";
    display: block;
    width: 18px;
    height: 2px;
    margin: 0 auto;
    background: repeating-linear-gradient(90deg, #b9aa9c 0 2px, transparent 2px 4px);
}
.nav-groups {
    display: flex;
    flex-direction: column;
}
.nav-groups button {
    display: flex;
    align-items: center;
    gap: 6px;
    height: 29px;
    padding-left: 9px;
    border-bottom: 1px solid #8c7264;
    background: linear-gradient(#f6f4ee, #e5dfcd);
}
.nav-groups .selected {
    background: linear-gradient(#c5e8ff, #6fbcff);
}
.nav-overflow {
    display: flex;
    justify-content: flex-end;
    height: 29px;
    padding: 2px;
    background: linear-gradient(#f6f4ee, #e5dfcd);
}
.nav-overflow button {
    width: 19px;
    padding: 4px;
    border: 1px solid #8c7264;
    border-radius: 2px;
}
.nav-overflow svg {
    width: 9px;
    height: 13px;
}

/* document */
.document {
    flex: 1;
    display: flex;
    flex-direction: column;
    min-width: 0;
}
.doc-tabs {
    display: flex;
    gap: 2px;
    align-items: flex-end;
    height: 24px;
    padding: 0 4px;
}
.doc-tab {
    display: flex;
    align-items: center;
    gap: 2px;
    height: 22px;
    padding: 0 7px;
    border: 1px solid #8c7264;
    border-bottom: 0;
    border-radius: 5px 5px 0 0;
    background: linear-gradient(#f6f4ee, #e5dfcd);
    white-space: nowrap;
}
.doc-tab.first {
    width: 153px;
    color: #7a4b3c;
}
.doc-tab.active {
    width: 165px;
    height: 24px;
    margin-bottom: -1px;
    padding: 0 3px 0 7px;
    background: #f6f5f1;
}
.tab-close {
    width: 13px;
    height: 13px;
    margin-left: auto;
    border: 1px solid #a3625c;
    border-radius: 1px;
    background: #f28c88;
}
.tab-close svg {
    width: 11px;
    height: 11px;
}
.tab-list {
    width: 17px;
    height: 17px;
    margin: 0 0 4px auto;
    padding: 5px 4px;
    border: 1px solid #8c7264;
    border-radius: 2px;
    background: linear-gradient(#f6f4ee, #e5dfcd);
}
.tab-list svg {
    width: 7px;
    height: 5px;
    fill: #8c7264;
}
.doc-body {
    flex: 1;
    display: flex;
    flex-direction: column;
    min-height: 0;
    padding: 3px 12px 14px;
    border: 1px solid #8c7264;
    border-radius: 0 3px 0 0;
}
.heading {
    display: flex;
    align-items: center;
    gap: 19px;
    height: 33px;
    padding-left: 5px;
}
.heading svg {
    width: 32px;
    height: 32px;
}
.heading h2 {
    font-size: 25px;
    line-height: 32px;
    color: #333;
}
.details {
    display: grid;
    grid-template-columns: 75px 1fr;
    align-items: center;
    row-gap: 10px;
    padding-top: 11px;
}
.details > label {
    font-weight: bold;
}
.name-row {
    display: flex;
    align-items: center;
    gap: 86px;
}
.name-row > input {
    flex: 1;
    height: 20px;
    padding: 0 2px;
    border: 1px solid #bdb0a5;
    background: #fff;
}
.check {
    display: flex;
    align-items: center;
    gap: 4px;
    width: 199px;
}
input[type="checkbox"] {
    appearance: none;
    width: 13px;
    height: 13px;
    border: 1px solid #8c7264;
    background: #f6f5f1;
}
input[type="checkbox"]:checked::after {
    content: "";
    display: block;
    width: 8px;
    height: 4px;
    margin: 2px;
    border: solid #7a5f50;
    border-width: 0 0 1px 1px;
    transform: rotate(-45deg);
}
.memo {
    display: flex;
    height: 82px;
    border: 1px solid #bdb0a5;
    background: #fff;
}
.memo textarea {
    flex: 1;
    padding: 1px 2px;
    resize: none;
}
.scrollbar {
    display: flex;
    flex-direction: column;
    justify-content: space-between;
    width: 17px;
    background: #f4f2ec;
    border-left: 1px solid #e0d9cf;
}
.scrollbar button {
    height: 17px;
    padding: 4px 3px;
    border: 1px solid #cdc2b6;
    border-radius: 2px;
}
.scrollbar svg {
    width: 9px;
    height: 6px;
}

/* nested tab pages */
.tabset {
    flex: 1;
    display: flex;
    flex-direction: column;
    min-height: 0;
}
.level1 {
    margin: 11px 2px 0 0;
}
.tabs {
    display: flex;
    align-items: flex-end;
    gap: 3px;
    height: 23px;
    padding-left: 4px;
}
.tabset .tabset .tabs {
    padding-left: 3px;
}
.tabs button {
    display: flex;
    align-items: center;
    gap: 2px;
    height: 22px;
    padding: 0 5px 0 6px;
    border: 1px solid #8c7264;
    border-bottom: 0;
    border-radius: 5px 5px 0 0;
    background: linear-gradient(#f6f4ee, #e5dfcd);
    white-space: nowrap;
}
.tabs .active {
    height: 24px;
    margin-bottom: -1px;
    background: #f6f5f1;
}
.panel {
    flex: 1;
    display: flex;
    flex-direction: column;
    min-height: 0;
    padding: 4px 6px 6px 3px;
    border: 1px solid #8c7264;
    border-radius: 0 3px 3px 3px;
    box-shadow: 2px 2px 1px #d9d2c4;
}
.panel.inner {
    padding: 2px 3px 3px;
}
.toolbar-row {
    display: flex;
    height: 28px;
    border-top: 1px solid #d9d0bc;
    border-bottom: 1px solid #d9d0bc;
    background: #f1eee6;
}
.toolbar {
    display: flex;
    align-items: center;
    border: 1px solid #8c7264;
    border-width: 0 1px 1px 0;
    border-radius: 0 2px 2px 2px;
    background: linear-gradient(#f6f4ee, #e5dfcd);
}
.toolbar button {
    display: flex;
    align-items: center;
    padding: 0 5px;
}
.toolbar svg {
    width: 16px;
    height: 16px;
}
.grip {
    align-self: stretch;
    width: 7px;
    margin-right: 4px;
    background: #dccdb2;
}
.toolbar .drop {
    padding: 0 7px 0 4px;
}
.toolbar .drop svg, .toolbar .arrow, .toolbar .options svg {
    width: 6px;
    height: 4px;
}
.toolbar .variants {
    gap: 5px;
    padding: 0 8px 0 5px;
}
.toolbar .arrow {
    margin-left: -2px;
}
.sep {
    width: 1px;
    height: 18px;
    margin: 0 3px 0 4px;
    background: #a38d7e;
}
.toolbar .options {
    align-self: stretch;
    margin-left: 2px;
    padding: 0 3px;
    background: linear-gradient(#e9e0cc, #dac8a4);
}
.options svg {
    fill: #8c7264;
}
.grid {
    flex: 1;
    margin: 1px 3px 2px 2px;
    padding: 1px;
    border: 1px solid #bdb0a5;
    background: #fff;
}
.grid table {
    width: 100%;
    border-collapse: collapse;
    table-layout: fixed;
}
.col-mark {
    width: 15px;
}
.col-approve {
    width: 450px;
}
.grid th {
    height: 21px;
    padding: 0;
    border: 1px solid #8c7264;
    background: linear-gradient(#f6f4ee, #e5dfcd);
    font-weight: normal;
}
.grid thead th {
    height: 20px;
}
.grid .left div {
    display: flex;
    align-items: center;
    justify-content: space-between;
    padding: 0 5px 0 3px;
}
.grid .left svg {
    width: 7px;
    height: 4px;
}
.grid tbody svg {
    width: 4px;
    height: 7px;
    margin: 0 auto;
}
.grid td {
    padding: 0 3px;
    border: 1px solid #e5dfd3;
    border-right-width: 0;
}
.grid td:last-child {
    text-align: center;
}
.grid td input {
    display: block;
    margin: 0 auto;
}
.focused td:nth-child(2) {
    outline: 1px dotted #000;
    outline-offset: -1px;
}

/* status bar */
.statusbar {
    flex: none;
    display: flex;
    height: 23px;
    border: 1px solid #8c7264;
    white-space: nowrap;
}
.status-left {
    flex: 1;
    display: flex;
    align-items: center;
    gap: 6px;
    padding-left: 4px;
    background: linear-gradient(#f6f4ee, #e5dfcd);
}
.status-right {
    display: flex;
    align-items: center;
    gap: 6px;
    padding: 0 5px 0 6px;
    border-left: 1px solid #8c7264;
    background: linear-gradient(#eee6d6, #d5c09c);
}
.date-edit {
    display: flex;
    width: 99px;
    height: 19px;
    border: 1px solid #c9bba9;
    background: #f4f1ea;
}
.date-edit input {
    flex: 1;
    min-width: 0;
    padding-left: 4px;
}
.date-edit button {
    width: 15px;
    margin: 1px;
    padding: 0 2px;
    border: 1px solid #a08c7c;
    border-radius: 2px;
}
.date-edit svg {
    width: 9px;
    height: 6px;
}

/* walkthrough markers */
.marker {
    position: absolute;
    border: 5px solid #4048cc;
    pointer-events: none;
}
.m1 { left: 411px; top: 22px; width: 98px; height: 34px; }
.m2 { left: -2px; top: 48px; width: 74px; height: 75px; }
.m3 { left: 449px; top: 355px; width: 95px; height: 41px; }
.m4 { left: 221px; top: 386px; width: 108px; height: 38px; }
.m5 { left: 1043px; top: 429px; width: 115px; height: 200px; }
.step {
    position: absolute;
    font: bold 16px/14px "Open Sans", sans-serif;
    color: #4048cc;
}
.s1 { left: 521px; top: 32px; }
.s2 { left: 77px; top: 107px; }
.s3 { left: 478px; top: 332px; }
.s4 { left: 205px; top: 400px; }
.s5 { left: 1078px; top: 396px; }
```
